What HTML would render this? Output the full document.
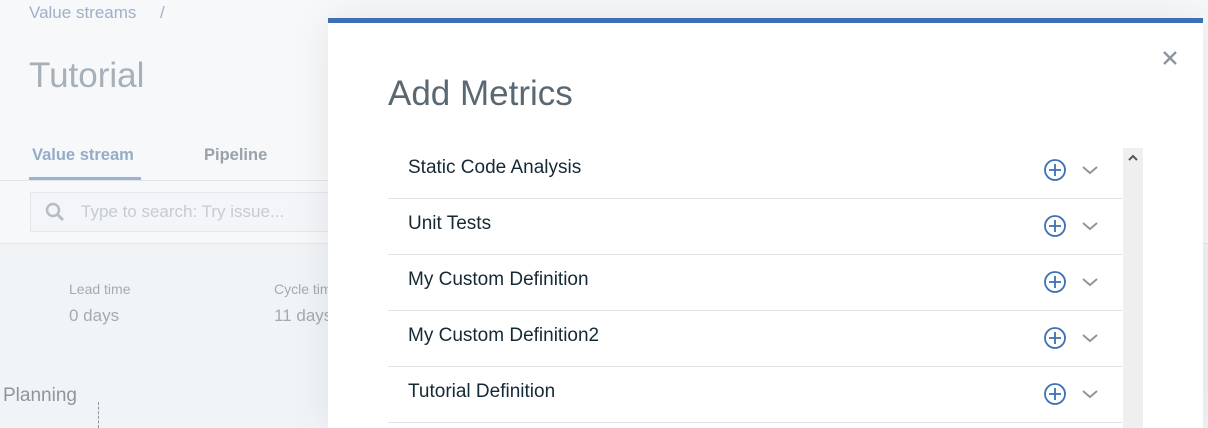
<!DOCTYPE html>
<html><head><style>
*{margin:0;padding:0;box-sizing:border-box}
html,body{width:1208px;height:428px;overflow:hidden}
body{position:relative;font-family:"Liberation Sans",sans-serif;background:#f1f4f7}
.top{position:absolute;left:0;top:0;width:1208px;height:244px;background:#f6f8fa;border-bottom:1px solid #e6e9ec}
.abs{position:absolute;white-space:nowrap}
.modal{position:absolute;left:328px;top:18px;width:875px;height:410px;background:#fff;border-top:5px solid #3d6fb5;box-shadow:0 0 40px rgba(0,0,0,0.08);overflow:hidden}
.row{position:absolute;left:60px;width:734px;height:56px;border-bottom:1px solid #dfe3e6}
.row span{position:absolute;left:20px;top:14px;font-size:19px;color:#152935}
.plus{position:absolute;left:656px;top:16px}
.chev{position:absolute;left:693px;top:21px}
</style></head><body>
<div class="top"></div>
<div class="abs" style="left:29px;top:3px;font-size:17px;color:#9fb1c8">Value streams</div>
<div class="abs" style="left:160px;top:3px;font-size:17px;color:#9fb1c8">/</div>
<div class="abs" style="left:29px;top:56px;font-size:35px;color:#a6b0b8">Tutorial</div>
<div class="abs" style="left:32px;top:146px;font-size:16.5px;font-weight:bold;color:#94acc8">Value stream</div>
<div class="abs" style="left:29px;top:177px;width:112px;height:3px;background:#9bb3d3"></div>
<div class="abs" style="left:204px;top:146px;font-size:16.5px;font-weight:bold;color:#9aa2a9">Pipeline</div>
<div class="abs" style="left:0;top:180px;width:330px;height:1px;background:#e2e6ea"></div>
<div class="abs" style="left:30px;top:192px;width:300px;height:40px;border:1px solid #e3e7eb;background:#f3f5f8"></div>
<svg class="abs" style="left:44px;top:200px" width="24" height="24" viewBox="0 0 24 24"><circle cx="9" cy="10" r="6" fill="none" stroke="#b6bec5" stroke-width="2.5"/><path d="M13 14l6 6" stroke="#b6bec5" stroke-width="3"/></svg>
<div class="abs" style="left:81px;top:202px;font-size:17px;color:#c4ccd2">Type to search: Try issue...</div>
<div class="abs" style="left:69px;top:281px;font-size:14px;color:#a3abb1">Lead time</div>
<div class="abs" style="left:69px;top:306px;font-size:17px;color:#a3abb1">0 days</div>
<div class="abs" style="left:274px;top:281px;font-size:14px;color:#a3abb1">Cycle time</div>
<div class="abs" style="left:274px;top:306px;font-size:17px;color:#a3abb1">11 days</div>
<div class="abs" style="left:3px;top:385px;font-size:19px;color:#8e969c">Planning</div>
<div class="abs" style="left:98px;top:402px;width:1px;height:26px;border-left:1px dashed #8e969c"></div>
<div class="modal">
<svg class="abs" style="left:834px;top:27px" width="16" height="16" viewBox="0 0 16 16"><path d="M2 2l12 12M14 2L2 14" stroke="#8d979f" stroke-width="2.4"/></svg>
<div class="abs" style="left:60px;top:51px;font-size:35px;color:#5a6872">Add Metrics</div>
<div class="abs" style="left:795px;top:125px;width:20px;height:300px;background:#efefef"></div>
<svg class="abs" style="left:798px;top:130px" width="14" height="10" viewBox="0 0 14 10"><path d="M3 7l4-4 4 4" fill="none" stroke="#555" stroke-width="2"/></svg>
<div class="row" style="top:120px"><span>Static Code Analysis</span>
<svg class="plus" width="24" height="24" viewBox="0 0 24 24"><circle cx="11" cy="11" r="10" fill="none" stroke="#3d6fb5" stroke-width="1.8"/><path d="M11 5v12M5 11h12" stroke="#3d6fb5" stroke-width="1.8"/></svg>
<svg class="chev" width="18" height="12" viewBox="0 0 18 12"><path d="M2 3l7 6 7-6" fill="none" stroke="#8d979f" stroke-width="2"/></svg></div>
<div class="row" style="top:176px"><span>Unit Tests</span>
<svg class="plus" width="24" height="24" viewBox="0 0 24 24"><circle cx="11" cy="11" r="10" fill="none" stroke="#3d6fb5" stroke-width="1.8"/><path d="M11 5v12M5 11h12" stroke="#3d6fb5" stroke-width="1.8"/></svg>
<svg class="chev" width="18" height="12" viewBox="0 0 18 12"><path d="M2 3l7 6 7-6" fill="none" stroke="#8d979f" stroke-width="2"/></svg></div>
<div class="row" style="top:232px"><span>My Custom Definition</span>
<svg class="plus" width="24" height="24" viewBox="0 0 24 24"><circle cx="11" cy="11" r="10" fill="none" stroke="#3d6fb5" stroke-width="1.8"/><path d="M11 5v12M5 11h12" stroke="#3d6fb5" stroke-width="1.8"/></svg>
<svg class="chev" width="18" height="12" viewBox="0 0 18 12"><path d="M2 3l7 6 7-6" fill="none" stroke="#8d979f" stroke-width="2"/></svg></div>
<div class="row" style="top:288px"><span>My Custom Definition2</span>
<svg class="plus" width="24" height="24" viewBox="0 0 24 24"><circle cx="11" cy="11" r="10" fill="none" stroke="#3d6fb5" stroke-width="1.8"/><path d="M11 5v12M5 11h12" stroke="#3d6fb5" stroke-width="1.8"/></svg>
<svg class="chev" width="18" height="12" viewBox="0 0 18 12"><path d="M2 3l7 6 7-6" fill="none" stroke="#8d979f" stroke-width="2"/></svg></div>
<div class="row" style="top:344px"><span>Tutorial Definition</span>
<svg class="plus" width="24" height="24" viewBox="0 0 24 24"><circle cx="11" cy="11" r="10" fill="none" stroke="#3d6fb5" stroke-width="1.8"/><path d="M11 5v12M5 11h12" stroke="#3d6fb5" stroke-width="1.8"/></svg>
<svg class="chev" width="18" height="12" viewBox="0 0 18 12"><path d="M2 3l7 6 7-6" fill="none" stroke="#8d979f" stroke-width="2"/></svg></div>
</div>
</body></html>
